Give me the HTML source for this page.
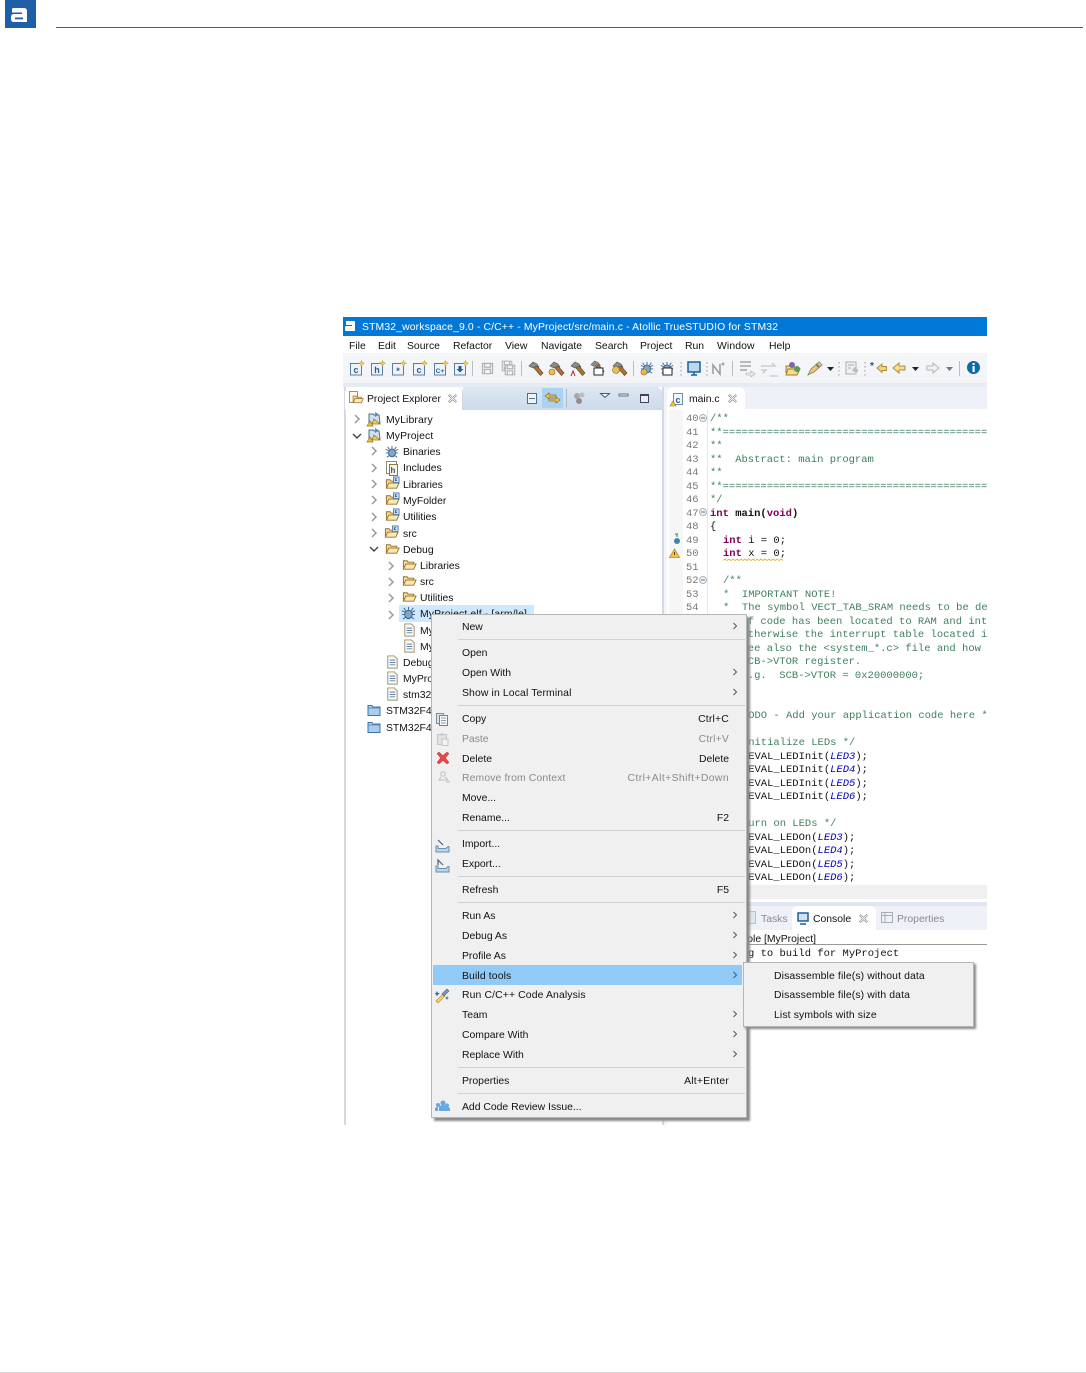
<!DOCTYPE html>
<html><head><meta charset="utf-8"><style>
html,body{margin:0;padding:0;background:#fff}
#p{position:relative;width:1086px;height:1373px;overflow:hidden;background:#fff;font-family:"Liberation Sans",sans-serif;font-size:10.4px;color:#111}
.b{position:absolute}
.t{position:absolute;white-space:nowrap;line-height:14px;height:14px;margin-top:1.500px}
.w{letter-spacing:.13px}
.c{position:absolute;white-space:pre;font-family:"Liberation Mono",monospace;font-size:10.500px;line-height:14px;height:14px;color:#111;margin-top:1px}
.g{color:#3f7f5f}.j{color:#3f5fbf}.k{color:#7f0055;font-weight:bold}.e{color:#0000c0;font-style:italic}
.n{position:absolute;left:686px;font-family:"Liberation Mono",monospace;font-size:10.500px;line-height:14px;color:#787878;margin-top:1px}
.d{color:#8a8a8a}
svg.o{position:absolute;left:0;top:0}
</style></head><body><div id="p">
<svg style="display:none"><defs>
<symbol id="file" viewBox="0 0 16 16"><path d="M3 1.500h7l3 3v10H3z" fill="#fdfbf3" stroke="#9a8f70"/><path d="M5 6h6M5 8.500h6M5 11h6" stroke="#5d7fa8"/></symbol>
<symbol id="fo" viewBox="0 0 16 16"><path d="M1.500 13V4h4l1 1.500h6V8" fill="#f8dc96" stroke="#96702a"/><path d="M1.500 13l2.500-5.500h11L12.500 13z" fill="#fbe7b0" stroke="#96702a"/></symbol>
<symbol id="fc" viewBox="0 0 16 16"><path d="M1.500 13V4h4l1 1.500h6V8" fill="#f8dc96" stroke="#96702a"/><path d="M1.500 13l2.500-5.500h11L12.500 13z" fill="#fbe7b0" stroke="#96702a"/><rect x="9" y="1" width="6" height="6" fill="#dce8f5" stroke="#4d7fb5"/><path d="M13 3h-2v2h2" stroke="#2a5a95" fill="none"/></symbol>
<symbol id="prj" viewBox="0 0 16 16"><path d="M3 7V3h4l1 1h5l1 8H3z" fill="#cfe0ee" stroke="#4f6f8a"/><path d="M9 1l4 2.500L9 6z" fill="#4d8fc4"/><path d="M1 15l3-5 3 5z" fill="#f3c23c" stroke="#9a7415" stroke-width=".7"/><path d="M8 8l6 5H6z" fill="#ecc870" stroke="#9a7415" stroke-width=".7"/></symbol>
<symbol id="bug" viewBox="0 0 16 16"><ellipse cx="8" cy="9" rx="4" ry="4.500" fill="#7fa6c9" stroke="#385f88"/><path d="M8 1v3M1 5l4 2M15 5l-4 2M1 9h3M12 9h3M2 14l3-2M14 14l-3-2M3 2l2 3M13 2l-2 3" stroke="#385f88"/></symbol>
<symbol id="blue" viewBox="0 0 16 16"><path d="M2 13.500V3.500h4l1 1.500h7v8.500z" fill="#a9cdee" stroke="#3f74a8"/><path d="M2.500 6h11" stroke="#5a92c8"/></symbol>
<symbol id="x" viewBox="0 0 8 8"><path d="M.5 1.500l1-1 2.500 2.500 2.500-2.500 1 1-2.500 2.500 2.500 2.500-1 1-2.500-2.500-2.500 2.500-1-1 2.500-2.500z" fill="none" stroke="#8a8a8a" stroke-width=".6"/></symbol>
<symbol id="ch" viewBox="0 0 8 10"><path d="M2 1l4 4-4 4" fill="none" stroke="#9a9a9a" stroke-width="1.500"/></symbol>
<symbol id="chd" viewBox="0 0 10 8"><path d="M1 2l4 4 4-4" fill="none" stroke="#444" stroke-width="1.400"/></symbol>
<symbol id="mch" viewBox="0 0 8 10"><path d="M2.500 2l3 3-3 3" fill="none" stroke="#555" stroke-width="1"/></symbol>
<symbol id="new" viewBox="0 0 16 16"><rect x="1.500" y="3.500" width="11" height="11.500" fill="#eef3f8" stroke="#5b7d9e"/><path d="M12.500 0.500l1 2 2 .7-2 1-1 2-1-2-2-1 2-.7z" fill="#f4cf55" stroke="#b9902a" stroke-width=".5"/></symbol>
<symbol id="ham" viewBox="0 0 16 16"><path d="M1 5l4-4 4 2 2 3-2 1-2-2-2 2z" fill="#8d8d8d" stroke="#555" stroke-width=".6"/><path d="M6 7l3-2 6 7-2.500 2.500z" fill="#a9713b" stroke="#6a4218" stroke-width=".6"/></symbol>
<symbol id="save" viewBox="0 0 16 16"><path d="M2.500 2.500h11v11h-11z" fill="#e4e4e4" stroke="#a9a9a9"/><path d="M5 2.500h6v4H5zM5 9h6v4.500H5z" fill="#f4f4f4" stroke="#a9a9a9"/></symbol>
</defs></svg>

<!-- logo -->
<div class="b" style="left:5px;top:0;width:31px;height:28px;background:#1f5fa8"></div>
<svg class="o" width="40" height="30"><path d="M13 8h11q3 0 3 3v11H14q-3 0-3-3v-2q0-3 3-3h8v-1.500H12V10q0-2 1-2z" fill="#fff"/><rect x="15" y="17.500" width="8" height="1.800" fill="#1f5fa8"/></svg>
<div class="b" style="left:56px;top:27px;width:1027px;height:1px;background:#24649f"></div>
<div class="b" style="left:0;top:1372px;width:1086px;height:1px;background:#d8d8d8"></div>

<!-- window -->
<div class="b" style="left:343px;top:317px;width:644px;height:19px;background:#0078d7"></div>
<div class="b" style="left:343px;top:336px;width:644px;height:17px;background:#fff"></div>
<div class="b" style="left:343px;top:353px;width:644px;height:30px;background:linear-gradient(#f5f6f8,#f2f4f8)"></div>
<div class="b" style="left:343px;top:383px;width:644px;height:742px;background:#fff"></div>
<div class="b" style="left:343px;top:383px;width:644px;height:4px;background:#e6ebf3"></div>
<div class="b" style="left:344px;top:387px;width:1.500px;height:738px;background:#d5d9e2"></div>
<div class="b" style="left:662px;top:387px;width:1.500px;height:738px;background:#d5d9e2"></div>

<svg class="o" width="360" height="340" viewBox="0 0 360 340" style="left:343px;top:317px"><path d="M3 4h8q1 0 1 1v9H3q-1 0-1-1v-2q0-2 1-2h6V8H3z" fill="#fff"/></svg>
<div class="t" style="left:362px;top:319px;color:#fff;letter-spacing:.14px">STM32_workspace_9.0 - C/C++ - MyProject/src/main.c - Atollic TrueSTUDIO for STM32</div>

<div class="t" style="left:349px;top:338px">File</div>
<div class="t" style="left:378px;top:338px">Edit</div>
<div class="t" style="left:407px;top:338px">Source</div>
<div class="t" style="left:453px;top:338px">Refactor</div>
<div class="t" style="left:505px;top:338px">View</div>
<div class="t" style="left:541px;top:338px">Navigate</div>
<div class="t" style="left:595px;top:338px">Search</div>
<div class="t" style="left:640px;top:338px">Project</div>
<div class="t" style="left:685px;top:338px">Run</div>
<div class="t" style="left:717px;top:338px;letter-spacing:.1px">Window</div>
<div class="t" style="left:769px;top:338px">Help</div>

<!-- toolbar icons -->
<svg class="o" width="1086" height="400">
<g font-family="Liberation Sans" font-size="9" font-weight="bold" fill="#2a5a95" text-anchor="middle">
<use href="#new" x="349" y="360" width="16" height="16"/><text x="356" y="373">c</text>
<use href="#new" x="370" y="360" width="16" height="16"/><text x="377" y="373">h</text>
<use href="#new" x="391" y="360" width="16" height="16"/><text x="398" y="374">*</text>
<use href="#new" x="412" y="360" width="16" height="16"/><text x="419" y="373">c</text>
<use href="#new" x="433" y="360" width="16" height="16"/><text x="440" y="373" font-size="6.500">C+</text>
<use href="#new" x="453" y="360" width="16" height="16"/><path d="M458.500 366h3v3h2l-3.500 3.500-3.500-3.500h2z" fill="#2a5a95"/>
</g>
<rect x="472" y="361" width="1" height="15" fill="#bdbdbd"/>
<use href="#save" x="480" y="361" width="15" height="15"/>
<use href="#save" x="500" y="359" width="14" height="14" opacity=".9"/><use href="#save" x="503" y="363" width="14" height="14"/>
<rect x="521" y="361" width="1" height="15" fill="#bdbdbd"/>
<use href="#ham" x="528" y="361" width="16" height="16"/>
<use href="#ham" x="549" y="361" width="16" height="16"/><circle cx="552" cy="372" r="3" fill="#e8c050" stroke="#8a6a18" stroke-width=".6"/>
<use href="#ham" x="570" y="361" width="16" height="16"/><path d="M571 376l2-5 2 5" stroke="#c02020" fill="none"/>
<use href="#ham" x="590" y="360" width="15" height="15"/><rect x="594" y="368" width="9" height="7" fill="#fff" stroke="#222"/>
<use href="#ham" x="612" y="361" width="16" height="16"/><circle cx="616" cy="370" r="3.500" fill="#e8c050" stroke="#8a6a18" stroke-width=".6"/>
<rect x="633" y="361" width="1" height="15" fill="#bdbdbd"/>
<use href="#bug" x="640" y="361" width="14" height="14"/><circle cx="644" cy="372" r="3" fill="#e3bd4c" stroke="#8a6a18" stroke-width=".6"/>
<use href="#bug" x="660" y="361" width="14" height="14"/><rect x="663" y="368" width="9" height="7" fill="#fff" stroke="#222"/>
<path d="M681 362v15" stroke="#999" stroke-dasharray="1.500 2.500"/>
<rect x="688" y="362" width="12" height="10" fill="#bcd8f0" stroke="#1e5f9a" stroke-width="1.500"/><path d="M691 375h6M694 372v3" stroke="#1e5f9a" stroke-width="1.500"/>
<path d="M707 362v15" stroke="#999" stroke-dasharray="1.500 2.500"/>
<path d="M713 374v-9l7 9v-10" fill="none" stroke="#9a9a9a" stroke-width="1.500"/><circle cx="723" cy="364" r="1.500" fill="#a5a5a5"/>
<rect x="732" y="361" width="1" height="15" fill="#bdbdbd"/>
<path d="M740 362h11M740 366h11M740 370h7" stroke="#a5a5a5" stroke-width="1.500"/><path d="M746 373h5v-2l4 3-4 3v-2h-5z" fill="#eee" stroke="#aaa" stroke-width=".6"/>
<path d="M761 366h14l-3-3M761 370h5l-3 3m15 3h-8" fill="none" stroke="#c6c6c6" stroke-width="1.300"/>
<path d="M786 373v-7h4l1 1h6v2" fill="#f3dc96" stroke="#9c7c2a"/><path d="M786 375l2-6h12l-3 6z" fill="#f5dd8d" stroke="#9c7c2a"/><circle cx="792" cy="365" r="3" fill="#7c68a8"/><circle cx="797" cy="369" r="3" fill="#5a9a58"/>
<path d="M808 375l3-6 8-7 3 3-8 7z" fill="#e9c878" stroke="#8a7a60" stroke-width=".8"/><path d="M816 364l3 3" stroke="#7a7a7a" stroke-width="2"/>
<path d="M827 367h7l-3.500 4z" fill="#222"/>
<path d="M839 362v15" stroke="#999" stroke-dasharray="1.500 2.500"/>
<rect x="846" y="362" width="10" height="12" fill="#f0f0f0" stroke="#aeaeae"/><path d="M852 370l4-4v3h2v3h-4z" fill="#bbb"/><path d="M848 365h6M848 368h3" stroke="#aaa"/>
<path d="M865 362v15" stroke="#999" stroke-dasharray="1.500 2.500"/>
<path d="M877 368l5-4v2.500h4.500v4H882v2z" fill="#f5d277" stroke="#a98a35" stroke-width=".9"/><text x="870" y="369" font-family="Liberation Sans" font-size="10" font-weight="bold" fill="#27459a">*</text>
<path d="M893 368l6-5v3h6v4h-6v3z" fill="#f8dd92" stroke="#b0903d"/>
<path d="M912 367h7l-3.500 4z" fill="#222"/>
<path d="M939 368l-6-5v3h-6v4h6v3z" fill="#f3f3f3" stroke="#b5b5b5"/>
<path d="M946 367h7l-3.500 4z" fill="#777"/>
<rect x="959" y="361" width="1" height="15" fill="#bdbdbd"/>
<circle cx="973.500" cy="367.500" r="6.500" fill="#0b6aa8"/><rect x="972.500" y="363" width="2.200" height="2" fill="#fff"/><rect x="972.500" y="366" width="2.200" height="6" fill="#fff"/>
</svg>

<!-- left panel tabs -->
<div class="b" style="left:463px;top:387px;width:199px;height:22px;background:linear-gradient(#dde7f3,#cddbec);border-radius:0 6px 0 0"></div>
<div class="b" style="left:345px;top:387px;width:118px;height:23px;background:#fff;border-radius:6px 6px 0 0;border-right:1px solid #d0d8e4;box-sizing:border-box"></div>
<div class="b" style="left:463px;top:409px;width:199px;height:1px;background:#d0d8e4"></div>
<div class="b" style="left:542px;top:388px;width:21px;height:20px;background:#a9d2f3"></div>
<svg class="o" width="1086" height="420">
<rect x="349.500" y="391.500" width="8" height="11" fill="#fff8e8" stroke="#a09070"/><use href="#fo" x="352" y="393" width="12" height="12"/>
<use href="#x" x="448" y="394" width="9" height="9"/>
<rect x="527.500" y="393.500" width="9" height="10" fill="#eef3f8" stroke="#4d6f8e"/><rect x="529" y="398" width="6" height="1" fill="#4d6f8e"/>
<path d="M545 396l4-3v2h7v2h-7v2zM560 400l-4-3v2h-7v2h7v2z" fill="#f0c860" stroke="#8a6d20" stroke-width=".7"/>
<rect x="566" y="389" width="1" height="18" fill="#aabbcc"/>
<circle cx="577" cy="396" r="3" fill="#a9a9a9"/><circle cx="582" cy="395" r="2.500" fill="#bdbdbd"/><circle cx="579" cy="401" r="3" fill="#8f8f8f"/>
<path d="M600.500 393.500h9l-4.500 4z" fill="#f2f5f9" stroke="#556"/>
<rect x="619" y="394" width="9" height="2" fill="#eef" stroke="#556" stroke-width=".8"/>
<rect x="640.500" y="394.500" width="8" height="8" fill="#e8eef6" stroke="#445"/><rect x="640.500" y="394.500" width="8" height="1.500" fill="#445"/>
</svg>
<div class="t" style="left:367px;top:391px">Project Explorer</div>

<!-- right panel tabs -->
<div class="b" style="left:664px;top:387px;width:323px;height:22px;background:#eef1f7"></div>
<div class="b" style="left:667px;top:387px;width:78px;height:23px;background:#fff;border-radius:6px 6px 0 0"></div>
<div class="b" style="left:664px;top:387px;width:3px;height:738px;background:#f3f4f8"></div>
<svg class="o" width="1086" height="420">
<rect x="673.500" y="393.500" width="9" height="11" fill="#f3f7fb" stroke="#6f8fae"/><text x="675.500" y="403" font-family="Liberation Sans" font-size="9" font-weight="bold" fill="#2a5a95">c</text><path d="M670 406l3-5 3 5z" fill="#f3c23c" stroke="#9a7415" stroke-width=".6"/>
<use href="#x" x="728" y="394" width="9" height="9"/>
</svg>
<div class="t" style="left:689px;top:391px">main.c</div>

<!-- tree -->
<svg class="o" width="1086" height="760">
<use href="#ch" x="353" y="414" width="8" height="10"/><use href="#chd" x="352" y="432" width="10" height="8"/>
<use href="#ch" x="370" y="446" width="8" height="10"/><use href="#ch" x="370" y="463" width="8" height="10"/><use href="#ch" x="370" y="479" width="8" height="10"/><use href="#ch" x="370" y="495" width="8" height="10"/><use href="#ch" x="370" y="512" width="8" height="10"/><use href="#ch" x="370" y="528" width="8" height="10"/>
<use href="#chd" x="369" y="545" width="10" height="8"/>
<use href="#ch" x="387" y="561" width="8" height="10"/><use href="#ch" x="387" y="577" width="8" height="10"/><use href="#ch" x="387" y="593" width="8" height="10"/><use href="#ch" x="387" y="610" width="8" height="10"/>
<use href="#prj" x="366" y="411" width="16" height="16"/><use href="#prj" x="366" y="427" width="16" height="16"/>
<use href="#bug" x="385" y="445" width="14" height="14"/>
<rect x="386.500" y="461.500" width="10" height="12" fill="#fff" stroke="#8a8a70"/><rect x="389.500" y="464.500" width="8" height="11" fill="#f7f3dc" stroke="#8a7a40"/><text x="390.500" y="473" font-family="Liberation Sans" font-size="8" font-weight="bold" fill="#2a5a95">h</text>
<use href="#fc" x="385" y="476" width="15" height="15"/><use href="#fc" x="385" y="492" width="15" height="15"/><use href="#fc" x="385" y="508" width="15" height="15"/><use href="#fc" x="384" y="525" width="15" height="15"/>
<use href="#fo" x="385" y="541" width="15" height="15"/>
<use href="#fo" x="402" y="557" width="15" height="15"/><use href="#fo" x="402" y="573" width="15" height="15"/><use href="#fo" x="402" y="589" width="15" height="15"/>
</svg>
<div class="b" style="left:399px;top:605px;width:135px;height:17px;background:#cde8ff"></div>
<svg class="o" width="1086" height="760">
<use href="#bug" x="401" y="606" width="15" height="15"/>
<use href="#file" x="402" y="622" width="15" height="16"/><use href="#file" x="402" y="638" width="15" height="16"/>
<use href="#file" x="385" y="654" width="15" height="16"/><use href="#file" x="385" y="670" width="15" height="16"/><use href="#file" x="385" y="686" width="15" height="16"/>
<use href="#blue" x="366" y="702" width="16" height="16"/><use href="#blue" x="366" y="719" width="16" height="16"/>
</svg>
<div class="t w" style="left:386px;top:412px">MyLibrary</div>
<div class="t w" style="left:386px;top:428px">MyProject</div>
<div class="t" style="left:403px;top:444px">Binaries</div>
<div class="t" style="left:403px;top:460px">Includes</div>
<div class="t" style="left:403px;top:477px">Libraries</div>
<div class="t" style="left:403px;top:493px">MyFolder</div>
<div class="t" style="left:403px;top:509px">Utilities</div>
<div class="t" style="left:403px;top:526px">src</div>
<div class="t" style="left:403px;top:542px">Debug</div>
<div class="t" style="left:420px;top:558px">Libraries</div>
<div class="t" style="left:420px;top:574px">src</div>
<div class="t" style="left:420px;top:590px">Utilities</div>
<div class="t w" style="left:420px;top:606px">MyProject.elf - [arm/le]</div>
<div class="t" style="left:420px;top:623px">MyProject.list</div>
<div class="t" style="left:420px;top:639px">MyProject.map</div>
<div class="t" style="left:403px;top:655px">Debug.launch</div>
<div class="t" style="left:403px;top:671px">MyProject.ld</div>
<div class="t" style="left:403px;top:687px">stm32f4xx.ld</div>
<div class="t" style="left:386px;top:703px">STM32F4xx_Lib</div>
<div class="t" style="left:386px;top:720px">STM32F4xx_Drv</div>

<!-- editor -->
<div class="b" style="left:669px;top:410px;width:14px;height:475px;background:#f6f6f6"></div>
<div class="b" style="left:707px;top:410px;width:1px;height:475px;background:#e8e8e8"></div>
<div class="n" style="top:411px">40</div><div class="n" style="top:425px">41</div><div class="n" style="top:438px">42</div><div class="n" style="top:452px">43</div><div class="n" style="top:465px">44</div><div class="n" style="top:479px">45</div><div class="n" style="top:492px">46</div><div class="n" style="top:506px">47</div><div class="n" style="top:519px">48</div><div class="n" style="top:533px">49</div><div class="n" style="top:546px">50</div><div class="n" style="top:560px">51</div><div class="n" style="top:573px">52</div><div class="n" style="top:587px">53</div><div class="n" style="top:600px">54</div>
<svg class="o" width="1086" height="620">
<g fill="#eef2f5" stroke="#8fa3b3" stroke-width=".8"><circle cx="703" cy="418" r="3.500"/><circle cx="703" cy="512" r="3.500"/><circle cx="703" cy="580" r="3.500"/></g>
<path d="M701 418h4M701 512h4M701 580h4" stroke="#5a7488"/>
<circle cx="677" cy="541" r="3" fill="#3f82b5"/><path d="M677 534v3M675 534h3" stroke="#2a8a4a"/>
<path d="M674.500 549l5 8.500h-10z" fill="#f6c244" stroke="#b78a1e" stroke-width=".8"/><path d="M674.500 552v3" stroke="#5a4410"/>
<path d="M723 560.500l2-1.500 2 1.500 2-1.500 2 1.500 2-1.500 2 1.500 2-1.500 2 1.500 2-1.500 2 1.500 2-1.500 2 1.500 2-1.500 2 1.500 2-1.500 2 1.500 2-1.500 2 1.500 2-1.500 2 1.500 2-1.500 2 1.500 2-1.500 2 1.500 2-1.500 2 1.500 2-1.500 2 1.500 2-1.500 2 1.500" fill="none" stroke="#e8b83c" stroke-width=".9"/>
</svg>
<div class="c g" style="left:710px;top:411px">/**</div>
<div class="c g" style="left:710px;top:425px;width:277px;overflow:hidden">**=====================================================================</div>
<div class="c g" style="left:710px;top:438px">**</div>
<div class="c g" style="left:710px;top:452px">**  Abstract: main program</div>
<div class="c g" style="left:710px;top:465px">**</div>
<div class="c g" style="left:710px;top:479px;width:277px;overflow:hidden">**=====================================================================</div>
<div class="c g" style="left:710px;top:492px">*/</div>
<div class="c" style="left:710px;top:506px;font-weight:bold"><span class="k">int</span> main(<span class="k">void</span>)</div>
<div class="c" style="left:710px;top:519px">{</div>
<div class="c" style="left:723px;top:533px"><span class="k">int</span> i = 0;</div>
<div class="c" style="left:723px;top:546px"><span class="k">int</span> x = 0;</div>
<div class="c g" style="left:723px;top:573px">/**</div>
<div class="c g" style="left:723px;top:587px">*  IMPORTANT NOTE!</div>
<div class="c g" style="left:723px;top:600px;width:264px;overflow:hidden">*  The symbol VECT_TAB_SRAM needs to be de</div>
<div class="c g" style="left:741.500px;top:614px">If code has been located to RAM and int</div>
<div class="c g" style="left:741.500px;top:627px">Otherwise the interrupt table located i</div>
<div class="c g" style="left:741.500px;top:641px">See also the &lt;system_*.c&gt; file and how</div>
<div class="c g" style="left:741.500px;top:654px">SCB-&gt;VTOR register.</div>
<div class="c g" style="left:741.500px;top:668px">E.g.  SCB-&gt;VTOR = 0x20000000;</div>
<div class="c g" style="left:723px;top:708px;width:264px;overflow:hidden">/* TODO - Add your application code here *</div>
<div class="c g" style="left:723px;top:735px">/* Initialize LEDs */</div>
<div class="c" style="left:723px;top:749px">STM_EVAL_LEDInit(<span class="e">LED3</span>);</div>
<div class="c" style="left:723px;top:762px">STM_EVAL_LEDInit(<span class="e">LED4</span>);</div>
<div class="c" style="left:723px;top:776px">STM_EVAL_LEDInit(<span class="e">LED5</span>);</div>
<div class="c" style="left:723px;top:789px">STM_EVAL_LEDInit(<span class="e">LED6</span>);</div>
<div class="c g" style="left:723px;top:816px">/* Turn on LEDs */</div>
<div class="c" style="left:723px;top:830px">STM_EVAL_LEDOn(<span class="e">LED3</span>);</div>
<div class="c" style="left:723px;top:843px">STM_EVAL_LEDOn(<span class="e">LED4</span>);</div>
<div class="c" style="left:723px;top:857px">STM_EVAL_LEDOn(<span class="e">LED5</span>);</div>
<div class="c" style="left:723px;top:870px">STM_EVAL_LEDOn(<span class="e">LED6</span>);</div>

<!-- console -->
<div class="b" style="left:664px;top:885px;width:323px;height:14px;background:#f0f0f0"></div>
<div class="b" style="left:664px;top:902px;width:323px;height:28px;background:#eef1f7"></div>
<div class="b" style="left:664px;top:902px;width:323px;height:4px;background:#e0e6f1"></div>
<div class="b" style="left:792px;top:906px;width:84px;height:24px;background:#fff;border-radius:6px 6px 0 0"></div>
<svg class="o" width="1086" height="940">
<rect x="746.500" y="911.500" width="9" height="12" fill="#dfe7ee" stroke="#b5c3ce"/>
<rect x="798" y="913" width="10" height="8" fill="#cfe2f2" stroke="#1e5f9a" stroke-width="1.500"/><path d="M800 924h6" stroke="#1e5f9a" stroke-width="1.500"/>
<use href="#x" x="859" y="914" width="9" height="9"/>
<rect x="881.500" y="912.500" width="11" height="10" fill="#eef1f5" stroke="#a5aeb8"/><path d="M881.500 915.500h11M885 913v9" stroke="#a5aeb8"/>
</svg>
<div class="t d" style="left:761px;top:911px">Tasks</div>
<div class="t" style="left:813px;top:911px">Console</div>
<div class="t d" style="left:897px;top:911px">Properties</div>
<div class="t" style="left:723px;top:931px">Console [MyProject]</div>
<div class="b" style="left:664px;top:944px;width:323px;height:1px;background:#999"></div>
<div class="c" style="left:716.500px;top:946px">Trying to build for MyProject</div>

<!-- context menu -->
<div class="b" style="left:431px;top:614px;width:316px;height:504px;background:#f0f0f0;border:1px solid #b5b5b5;box-sizing:border-box;box-shadow:3px 3px 2px #8a8a8a"></div>
<div class="b" style="left:458px;top:639px;width:287px;height:1px;background:#d2d2d2"></div>
<div class="b" style="left:458px;top:705px;width:287px;height:1px;background:#d2d2d2"></div>
<div class="b" style="left:458px;top:830px;width:287px;height:1px;background:#d2d2d2"></div>
<div class="b" style="left:458px;top:876px;width:287px;height:1px;background:#d2d2d2"></div>
<div class="b" style="left:458px;top:902px;width:287px;height:1px;background:#d2d2d2"></div>
<div class="b" style="left:458px;top:1067px;width:287px;height:1px;background:#d2d2d2"></div>
<div class="b" style="left:458px;top:1093px;width:287px;height:1px;background:#d2d2d2"></div>
<div class="b" style="left:433px;top:965px;width:309px;height:20px;background:#91c9f7"></div>

<div class="t" style="left:462px;top:619px">New</div>
<div class="t" style="left:462px;top:645px">Open</div>
<div class="t" style="left:462px;top:665px">Open With</div>
<div class="t w" style="left:462px;top:685px">Show in Local Terminal</div>
<div class="t" style="left:462px;top:711px">Copy</div>
<div class="t d" style="left:462px;top:731px">Paste</div>
<div class="t" style="left:462px;top:751px">Delete</div>
<div class="t d w" style="left:462px;top:770px">Remove from Context</div>
<div class="t" style="left:462px;top:790px">Move...</div>
<div class="t" style="left:462px;top:810px">Rename...</div>
<div class="t" style="left:462px;top:836px">Import...</div>
<div class="t" style="left:462px;top:856px">Export...</div>
<div class="t" style="left:462px;top:882px">Refresh</div>
<div class="t" style="left:462px;top:908px">Run As</div>
<div class="t" style="left:462px;top:928px">Debug As</div>
<div class="t" style="left:462px;top:948px">Profile As</div>
<div class="t w" style="left:462px;top:968px">Build tools</div>
<div class="t w" style="left:462px;top:987px">Run C/C++ Code Analysis</div>
<div class="t" style="left:462px;top:1007px">Team</div>
<div class="t" style="left:462px;top:1027px">Compare With</div>
<div class="t" style="left:462px;top:1047px">Replace With</div>
<div class="t" style="left:462px;top:1073px">Properties</div>
<div class="t" style="left:462px;top:1099px">Add Code Review Issue...</div>

<div class="t" style="right:357px;top:711px;letter-spacing:.2px">Ctrl+C</div>
<div class="t d" style="right:357px;top:731px;letter-spacing:.2px">Ctrl+V</div>
<div class="t" style="right:357px;top:751px">Delete</div>
<div class="t d" style="right:357px;top:770px;letter-spacing:.4px">Ctrl+Alt+Shift+Down</div>
<div class="t" style="right:357px;top:810px">F2</div>
<div class="t" style="right:357px;top:882px">F5</div>
<div class="t" style="right:357px;top:1073px;letter-spacing:.2px">Alt+Enter</div>

<svg class="o" width="1086" height="1130">
<use href="#mch" x="731" y="621" width="8" height="10"/><use href="#mch" x="731" y="667" width="8" height="10"/><use href="#mch" x="731" y="687" width="8" height="10"/>
<use href="#mch" x="731" y="910" width="8" height="10"/><use href="#mch" x="731" y="930" width="8" height="10"/><use href="#mch" x="731" y="950" width="8" height="10"/><use href="#mch" x="731" y="970" width="8" height="10"/>
<use href="#mch" x="731" y="1009" width="8" height="10"/><use href="#mch" x="731" y="1029" width="8" height="10"/><use href="#mch" x="731" y="1049" width="8" height="10"/>
<rect x="436.500" y="713.500" width="7" height="10" fill="#d8e2ea" stroke="#7a8f9e"/><rect x="439.500" y="715.500" width="8" height="10" fill="#f6f8fa" stroke="#6c8396"/><path d="M441 718h5M441 720.500h5M441 723h5" stroke="#6c8396" stroke-width=".8"/>
<rect x="437.500" y="734.500" width="9" height="10" fill="#e2e2e2" stroke="#c5c5c5"/><rect x="440.500" y="733" width="3" height="3" fill="#cfcfcf"/><rect x="442" y="739" width="6" height="6.500" fill="#f4f4f4" stroke="#c5c5c5"/>
<path d="M437 753.500l2-1.500 4 3.500 4-3.500 2 1.500-3.500 4.500 3.500 4.500-2 1.500-4-3.500-4 3.500-2-1.500 3.500-4.500z" fill="#e2474a" stroke="#d03538" stroke-width=".5"/>
<circle cx="443" cy="774" r="2.200" fill="none" stroke="#bcbcbc"/><path d="M441 777l-2 3h9l-3-3M446 782h4" stroke="#bcbcbc" fill="none"/>
<path d="M436 846h2v2.500h8l2-2h1v5.500h-13z" fill="#bdd3e8" stroke="#6a8fb0"/><path d="M438 840l5 5" stroke="#505e70" stroke-width="1.200"/>
<path d="M436 866h2v2.500h8l2-2h1v5.500h-13z" fill="#bdd3e8" stroke="#6a8fb0"/><path d="M438 865v-5l5 5" stroke="#505e70" stroke-width="1.200" fill="none"/>
<path d="M436 1001l7-7 2 2-7 7z" fill="#f3d36f" stroke="#a98a35" stroke-width=".6"/><path d="M442 994l5-5 2 2-5 5z" fill="#7e9ac2" stroke="#425f8f" stroke-width=".6"/><path d="M437 991l1 2 2 .5-2 1-1 2-1-2-1.500-1 1.500-.5zM447 996l.7 1.500 1.500.5-1.500.5-.7 1.500-.7-1.500-1.300-.5 1.300-.5z" fill="#3d67a8"/>
<g fill="#64a8e6"><circle cx="443" cy="1103" r="2.500"/><circle cx="438" cy="1105" r="2"/><circle cx="447" cy="1105.500" r="2"/><path d="M439 1111v-3q0-3 4-3t4 3v3z"/><path d="M435 1111v-2q0-2 3-2v4zM450 1111v-2q0-2-3-2v4z"/></g>
</svg>

<!-- submenu -->
<div class="b" style="left:743px;top:962px;width:231px;height:65px;background:#f0f0f0;border:1px solid #b5b5b5;box-sizing:border-box;box-shadow:2px 2px 2px #8a8a8a"></div>
<div class="t w" style="left:774px;top:968px">Disassemble file(s) without data</div>
<div class="t w" style="left:774px;top:987px">Disassemble file(s) with data</div>
<div class="t w" style="left:774px;top:1007px">List symbols with size</div>

</div></body></html>
